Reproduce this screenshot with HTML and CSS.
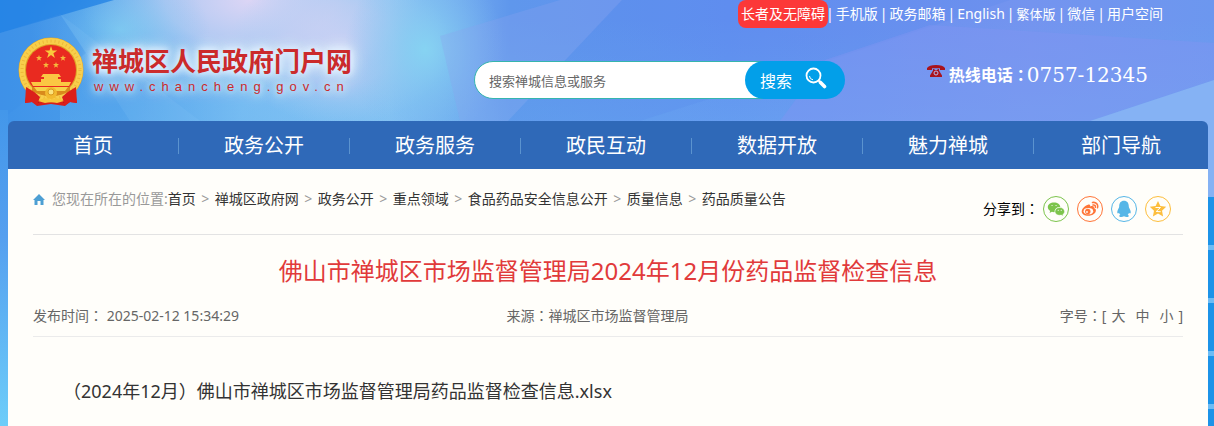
FILE: index.html
```
<!DOCTYPE html>
<html lang="zh-CN">
<head>
  <meta charset="UTF-8">
  <title>佛山市禅城区市场监督管理局2024年12月份药品监督检查信息</title>
  <link rel="stylesheet" href="styles.css">
</head>
<body>

<svg class="backdrop" viewBox="0 0 1214 426" preserveAspectRatio="none" aria-hidden="true">
  <defs>
    <linearGradient id="sky" x1="0" y1="0" x2="1" y2="0">
      <stop offset="0" stop-color="#3f93e9"/>
      <stop offset=".1" stop-color="#4c9eea"/>
      <stop offset=".2" stop-color="#7abdf2"/>
      <stop offset=".32" stop-color="#8ec6f3"/>
      <stop offset=".42" stop-color="#5f97ec"/>
      <stop offset=".6" stop-color="#628ff0"/>
      <stop offset=".85" stop-color="#7494ef"/>
      <stop offset="1" stop-color="#6c97ef"/>
    </linearGradient>
    <linearGradient id="side" x1="0" y1="0" x2="0" y2="1">
      <stop offset="0" stop-color="#4397ea"/>
      <stop offset=".4" stop-color="#559fef"/>
      <stop offset="1" stop-color="#6dcdf9"/>
    </linearGradient>
    <radialGradient id="lilac">
      <stop offset="0" stop-color="#dcd5f5"/>
      <stop offset=".5" stop-color="#c3cff3" stop-opacity=".8"/>
      <stop offset="1" stop-color="#a5cdf3" stop-opacity="0"/>
    </radialGradient>
    <radialGradient id="cyan">
      <stop offset="0" stop-color="#86d3f2"/>
      <stop offset="1" stop-color="#7cbcf0" stop-opacity="0"/>
    </radialGradient>
    <linearGradient id="low" x1="0" y1="0" x2="0" y2="1">
      <stop offset="0" stop-color="#6bb8f1" stop-opacity="0"/>
      <stop offset="1" stop-color="#6bb8f1" stop-opacity=".7"/>
    </linearGradient>
  </defs>
  <rect width="1214" height="426" fill="url(#sky)"/>
  <rect x="60" y="20" width="1154" height="110" fill="url(#low)" opacity=".5"/>
  <ellipse cx="250" cy="0" rx="170" ry="90" fill="url(#lilac)"/>
  <ellipse cx="340" cy="45" rx="110" ry="80" fill="url(#lilac)" opacity=".7"/>
  <ellipse cx="425" cy="50" rx="80" ry="90" fill="url(#cyan)"/>
  <ellipse cx="120" cy="30" rx="90" ry="60" fill="url(#cyan)" opacity=".7"/>
  <path d="M0 0H114L0 33z" fill="#1f80e4" opacity=".75"/>
  <path d="M60 14L86 53L0 121V33z" fill="#3b90e7" opacity=".3"/>
  <path d="M60 14L200 121H130L86 53z" fill="#90ccf5" opacity=".15"/>
  <path d="M440 36L560 0H622L508 121H460z" fill="#8aa2f0" opacity=".3"/>
  <path d="M622 0H1010L800 70L640 121H508z" fill="#5686ec" opacity=".2"/>
  <path d="M930 25L1214 43V80L1090 121H780L825 60z" fill="#8095f1" opacity=".45"/>
  <path d="M1090 121L1214 80V200H1090z" fill="#85b2f4"/>
  <rect y="110" width="8" height="316" fill="url(#side)"/>
  <rect x="1206" y="197" width="8" height="229" fill="#1c93e8"/>
  <path d="M1206 247.500h8M1206 300.500h8M1206 353.500h8M1206 406.500h8" stroke="#6dbcf5" stroke-width="5"/>
</svg>

<div class="page">
  <header class="header">
    <div class="toplinks">
      <a class="care" href="#">长者及无障碍</a>
      <span>|</span><a href="#">手机版</a>
      <span>|</span><a href="#">政务邮箱</a>
      <span>|</span><a href="#">English</a>
      <span>|</span><a class="trad" href="#">繁体版</a>
      <span>|</span><a href="#">微信</a>
      <span>|</span><a href="#">用户空间</a>
    </div>
    <div class="masthead">
      <a class="brand" href="#">
        <svg class="emblem" viewBox="0 0 66 70" aria-hidden="true">
          <path d="M10 48L7 66l7-1 5 4 14-2 14 2 5-4 7 1-3-18z" fill="#d81f1b"/>
          <path d="M12 53l-1 10M18 57l2 9M54 53l1 10M48 57l-2 9" stroke="#8f1512" stroke-width="1"/>
          <circle cx="33" cy="33" r="32.500" fill="#dfa126"/>
          <circle cx="33" cy="33" r="29" fill="none" stroke="#f8cf4b" stroke-width="6"/>
          <circle cx="33" cy="33" r="29" fill="none" stroke="#edb838" stroke-width="3" stroke-dasharray="1 3"/>
          <circle cx="33" cy="33" r="25" fill="#e92a20"/>
          <path d="M33 9l1.500 4.500h4.700l-3.800 2.800 1.500 4.600-3.900-2.800-3.900 2.800 1.500-4.600-3.800-2.800h4.700z" fill="#f9c83c"/>
          <g fill="#f5b83c">
            <path id="s" d="M21 18l.8 2h2.200l-1.700 1.500.6 2.200-1.900-1.200-1.900 1.200.6-2.200-1.700-1.500h2.200z"/>
            <use href="#s" x="24"/>
            <use href="#s" x="7" y="7"/>
            <use href="#s" x="17" y="7"/>
          </g>
          <path d="M25 37h16l2 3H23zM26 40h14v2H26zM23 42h20v3H23zM13 45h40l-2 4H15z" fill="#fbc743"/>
          <path d="M14 50h38v4q-8 5-19 5t-19-5z" fill="#d98a1c"/>
          <path d="M16 50h34l-3 4H19z" fill="#f6d24a"/>
          <path d="M8 50q8 4 14 10l-3 8-5-3-7 1zM58 50q-8 4-14 10l3 8 5-3 7 1z" fill="#db1f1b"/>
          <circle cx="33" cy="56" r="6" fill="#f2b92f"/>
          <circle cx="33" cy="55" r="3" fill="#fbe27b" stroke="#d99a1e"/>
          <path d="M20 64q7-5 13-1 6-4 13 1l-7 2-6-1-6 1z" fill="#f5c53b"/>
        </svg>
        <span class="brand-text">
          <strong>禅城区人民政府门户网</strong>
          <small>www.chancheng.gov.cn</small>
        </span>
      </a>
      <form class="search">
        <input type="text" placeholder="搜索禅城信息或服务" aria-label="搜索禅城信息或服务">
        <button type="button">搜索
          <svg viewBox="0 0 22 22" aria-hidden="true">
            <circle cx="8.500" cy="8.500" r="7" fill="none" stroke="#fff" stroke-width="1.800"/>
            <path d="M4.500 9a4 4 0 0 0 3.500 3.800" fill="none" stroke="#fff"/>
            <path d="M13.500 13.500l2 2" stroke="#fff" stroke-width="1.800"/>
            <path d="M15.500 15.500l4 4" stroke="#fff" stroke-width="3.600" stroke-linecap="round"/>
          </svg>
        </button>
      </form>
      <p class="hotline">
        <svg viewBox="0 0 18 13" aria-hidden="true">
          <path d="M0 5V3Q2 0 9 0t9 3v2h-5V3.300H5V5z" fill="#a9131c"/>
          <path d="M6 4h1.500v1h3V4H12v1.500l3 5V12H3v-1.500l3-5z" fill="#a9131c"/>
          <circle cx="9" cy="8" r="2" fill="none" stroke="#b9b8ec"/>
        </svg>
        <b>热线电话<span class="colon" lang="zh-TW">：</span></b><span class="number">0757-12345</span>
      </p>
    </div>
  </header>

  <nav class="nav">
    <a href="#">首页</a>
    <a href="#">政务公开</a>
    <a href="#">政务服务</a>
    <a href="#">政民互动</a>
    <a href="#">数据开放</a>
    <a href="#">魅力禅城</a>
    <a href="#">部门导航</a>
  </nav>

  <main class="content">
    <div class="bar">
      <div class="crumbs">
        <svg viewBox="0 0 12 11" aria-hidden="true"><path d="M6 0l6 6h-1.500v5h-3V7h-3v4h-3V6H0z" fill="#4d9fd3"/></svg>
        <span>您现在所在的位置:</span><a href="#">首页</a><i>&gt;</i><a href="#">禅城区政府网</a><i>&gt;</i><a href="#">政务公开</a><i>&gt;</i><a href="#">重点领域</a><i>&gt;</i><a href="#">食品药品安全信息公开</a><i>&gt;</i><a href="#">质量信息</a><i>&gt;</i><a href="#">药品质量公告</a>
      </div>
      <div class="share">
        <span class="label">分享到<span class="colon" lang="zh-TW">：</span></span>
        <a class="wechat" href="#" aria-label="微信">
          <svg viewBox="0 0 18 18"><path d="M7 2.500c3.500 0 6.300 2 6.300 4.600-3.600 0-6 2-5.500 5-.9.100-2 0-2.900-.3L2.600 13l.6-2.200C1.800 10 .8 8.700.8 7.200.8 4.600 3.500 2.500 7 2.500z" fill="#7cc44c"/><path d="M12.800 7.500c2.700 0 4.700 1.800 4.700 3.900 0 1.300-.7 2.300-1.700 3l.4 1.700-1.900-1c-3.500.7-6.300-1.100-6.300-3.600 0-2.200 2-4 4.800-4z" fill="#7cc44c" stroke="#fffefa" stroke-width=".4"/><path d="M5 5.500h.1M9 5.500h.1M11.200 10.300h.1M14.200 10.300h.1" stroke="#fffefa" stroke-width="1.100" stroke-linecap="round"/></svg>
        </a>
        <a class="weibo" href="#" aria-label="微博">
          <svg viewBox="0 0 18 18"><path d="M7.500 4.500c1.400-.4 2 .5 1.600 1.900 2.500-1 4.400-.5 3.800 1.700 1.500.5 2.100 1.500 2 2.600-.3 2.800-3.600 5-7.700 5-3.500 0-6.500-1.600-6.500-4.300C.7 8.900 4.500 5.200 7.500 4.500z" fill="#ff7538"/><ellipse cx="7.400" cy="11.200" rx="4.800" ry="3.100" fill="#fffefa"/><circle cx="6.800" cy="11.500" r="2.700" fill="#ff7538"/><circle cx="6" cy="12" r=".9" fill="#fffefa"/><path d="M11.500 2.500c3.500-.7 6 2 5 5.200M12 5c1.500-.4 2.700.7 2.300 2.200" fill="none" stroke="#ff7538" stroke-width="1.500" stroke-linecap="round"/></svg>
        </a>
        <a class="qq" href="#" aria-label="QQ">
          <svg viewBox="0 0 18 18"><path d="M9 .8c3.200 0 4.900 2.300 4.800 5.700 0 .8.300 1.200.7 2 1.100 1.800 1.800 4.400.7 5-.4.100-.9-.3-1.200-.8-.3.900-.7 1.500-1.300 2.100 1.100.5 1.300 1.100.9 1.600-.7.900-3.300.8-4.600-.2-1.300 1-3.900 1.100-4.600.2-.4-.5-.2-1.100.9-1.600-.6-.6-1-1.200-1.300-2.100-.3.500-.8.900-1.200.8-1.100-.6-.4-3.200.7-5 .4-.8.700-1.200.7-2C4.100 3.100 5.800.8 9 .8z" fill="#56b6e7"/></svg>
        </a>
        <a class="qzone" href="#" aria-label="QQ空间">
          <svg viewBox="0 0 18 18"><path d="M9 1l2.400 5.100 5.800.7-4.200 3.900 1.100 5.700L9 13.600l-5.100 2.800L5 10.700.8 6.800l5.800-.7z" fill="#fdbe3d"/><path d="M6.500 7.500h5l-4.300 4 4.500.2" fill="none" stroke="#fffefa" stroke-width="1"/></svg>
        </a>
      </div>
    </div>

    <h1>佛山市禅城区市场监督管理局2024年12月份药品监督检查信息</h1>

    <div class="meta">
      <span>发布时间<span class="colon" lang="zh-TW">：</span> 2025-02-12 15:34:29</span>
      <span>来源<span class="colon" lang="zh-TW">：</span>禅城区市场监督管理局</span>
      <span class="size">字号<span class="colon" lang="zh-TW">：</span>[<a href="#">大</a><a href="#">中</a><a href="#">小</a>]</span>
    </div>

    <div class="article">
      <a href="#">（2024年12月）佛山市禅城区市场监督管理局药品监督检查信息.xlsx</a>
    </div>
  </main>
</div>

</body>
</html>
```
FILE: styles.css
```
* { box-sizing: border-box; }
html, body { min-height: 100%; }
body {
  margin: 0;
  font-family: "Noto Sans", "Noto Sans CJK SC", sans-serif;
  font-size: 14px;
  line-height: 20px;
  color: #333;
  background: #4fa3ee;
}
a { color: inherit; text-decoration: none; }
p, h1 { margin: 0; }
/* the TC face centres the full-width colon in its box */
.colon {
  font-family: "Noto Sans CJK TC", sans-serif;
  line-height: 1;
}
.backdrop {
  position: absolute;
  top: 0;
  left: 0;
  width: 100%;
  height: 426px;
}
.page {
  position: relative;
  display: flex;
  flex-direction: column;
  min-height: 100vh;
  margin: 0 6px 0 8px;
}

/* header */
.toplinks {
  display: flex;
  justify-content: flex-end;
  gap: 2px;
  padding-right: 45px;
  line-height: 28px;
  color: #fff;
}
.toplinks .care {
  padding: 0 3px;
  margin-right: -4px;
  background: #fc3838;
  border-radius: 8px;
}
.toplinks .trad { font-size: 13px; }
.masthead {
  display: flex;
  align-items: flex-start;
  height: 93px;
  padding: 9px 60px 0 10px;
}
.brand {
  display: flex;
  gap: 8px;
}
.emblem {
  width: 66px;
  height: 70px;
}
.brand-text {
  display: flex;
  flex-direction: column;
  width: 262px;
  padding-top: 8px;
  color: #cb2a2b;
  text-shadow: 0 0 6px #e4f2ff, 0 0 10px #e4f2ff, 0 0 14px #e4f2ff, 0 0 18px #e4f2ff;
}
.brand-text strong {
  font-size: 26px;
  line-height: 32px;
  font-weight: bold;
}
.brand-text small {
  padding-left: 2px;
  font-family: "Liberation Sans", sans-serif;
  font-size: 13px;
  line-height: 20px;
  letter-spacing: 6px;
}
.search {
  display: flex;
  width: 371px;
  margin: 24px 0 0 120px;
}
.search input {
  flex: 1;
  min-width: 0;
  height: 38px;
  margin-right: -20px;
  padding: 0 14px;
  border: 1px solid #35b5ae;
  border-radius: 19px 0 0 19px;
  background: #fff;
  font: 13px "Noto Sans CJK SC", sans-serif;
}
.search input::placeholder { color: #666; }
.search button {
  display: flex;
  align-items: center;
  gap: 13px;
  width: 100px;
  height: 38px;
  padding: 0 15px;
  border: 0;
  border-radius: 19px;
  background: #029fe9;
  color: #fff;
  font: 16px "Noto Sans CJK SC", sans-serif;
}
.search button svg {
  flex: none;
  width: 22px;
  height: 22px;
  margin-bottom: 4px;
}
.hotline {
  display: flex;
  margin: 25px 0 0 auto;
  line-height: 26px;
  color: #fff;
}
.hotline svg {
  width: 18px;
  height: 13px;
  margin: 3px 4px 0 0;
}
.hotline b { font-size: 16px; margin-right: -2px; }
.hotline .number {
  font-family: Georgia, "DejaVu Serif", serif;
  font-size: 20px;
}

/* main menu */
.nav {
  display: flex;
  height: 48px;
  background: #2f69b8;
  border-radius: 6px 6px 0 0;
}
.nav a {
  flex: 0 0 14.25%;
  display: flex;
  align-items: center;
  height: 16px;
  margin-top: 17px;
  justify-content: center;
  border-right: 1px solid #5b93cf;
  color: #fff;
  font-size: 20px;
}
.nav a:last-child { flex: 1; border: 0; }

/* article */
.content {
  flex: 1;
  padding: 0 25px;
  background: #fffefa;
}
.bar {
  display: flex;
  justify-content: space-between;
  height: 66px;
  padding: 20px 12px 0 0;
  border-bottom: 1px solid #e3e3e3;
}
.crumbs {
  display: flex;
  color: #999;
}
.crumbs svg {
  width: 12px;
  height: 11px;
  margin: 5px 7px 0 0;
}
.crumbs a { color: #333; }
.crumbs i {
  width: 19px;
  font-style: normal;
  text-align: center;
}
.share {
  display: flex;
  align-items: center;
  gap: 8px;
  height: 40px;
  color: #000;
}
.share .label { margin-right: -4px; }
.share a {
  display: flex;
  align-items: center;
  justify-content: center;
  width: 26px;
  height: 26px;
  border: 1px solid;
  border-radius: 50%;
}
.share svg { width: 18px; height: 18px; }
.wechat { color: #7cc44c; }
.weibo { color: #ff7538; }
.qq { color: #56b6e7; }
.qzone { color: #fdbe3d; }
h1 {
  padding-top: 18px;
  font-size: 24px;
  line-height: 36px;
  font-weight: normal;
  text-align: center;
  color: #e13a3a;
}
.meta {
  display: grid;
  grid-template-columns: 7fr 8fr 2fr;
  padding: 17px 0 10px;
  border-bottom: 1px solid #ebebeb;
  color: #666;
}
.size { text-align: right; white-space: nowrap; }
.size a { margin: 0 5px; }
.article {
  padding: 40px 30px;
  font-size: 18px;
  line-height: 28px;
}
```
